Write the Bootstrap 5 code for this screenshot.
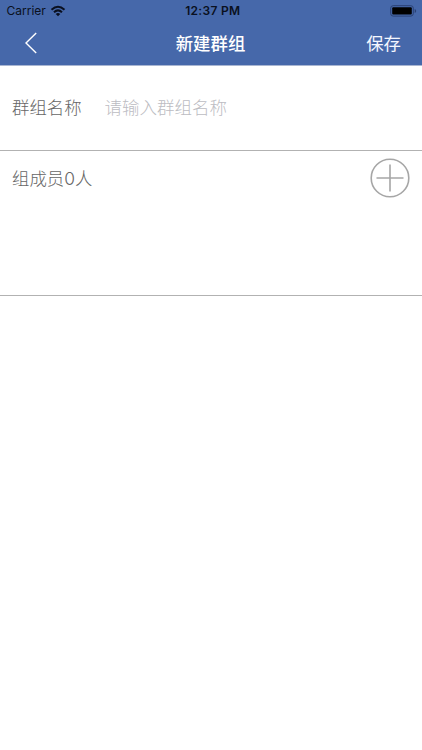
<!DOCTYPE html>
<html lang="zh-CN">
<head>
<meta charset="utf-8">
<meta name="viewport" content="width=device-width, initial-scale=1">
<title>新建群组</title>
<link href="https://cdn.jsdelivr.net/npm/bootstrap@5.3.0/dist/css/bootstrap.min.css" rel="stylesheet">
<style>
body{font-family:Inter,"Noto Sans CJK SC",sans-serif;font-size:17.5px;line-height:26px;color:#666;min-height:100vh;background:#fff}
svg{display:block;flex:none}
.app-head{background:#4668aa;height:66px;border-bottom:1px solid #a9b6d2}
.status{height:22px;padding:0 5px 0 6.5px;font-size:12px;line-height:22px;color:#0a1020}
.status > *,.titlebar > *{flex:1 1 0}
.carrier{letter-spacing:0}
.clock{font-weight:600;letter-spacing:.3px;padding-left:2px}
.titlebar{height:41px;padding:0 21px 0 24px;color:#fff}
.page-title{font-weight:500;font-size:17.4px;padding:2px 4px 0 0}
.back-btn,.save-btn,.add-btn{background:none;border:0;color:inherit;padding:0}
.save-btn{color:#f4f7ff;font-weight:400;font-size:17.4px;padding-top:2px}
.form-line{border-bottom:1px solid #b2b2b2;padding:0 12px}
.name-line{height:85px}
.member-line{height:145px;padding-top:7px}
.thin-text{font-weight:300;font-size:17.4px}
.label-col{width:92.5px}
.name-input{font-size:17.5px;line-height:26px;font-weight:300;height:26px;min-width:0}
.name-input::placeholder{color:#bcbcc2;opacity:1}
</style>
</head>
<body>
<header class="app-head">
  <div class="status d-flex align-items-center">
    <div class="d-flex align-items-center">
      <span class="carrier">Carrier</span>
      <svg class="ms-1" width="16" height="12" viewBox="0 0 16 12" fill="none" stroke="#0a1020" stroke-width="2"><path d="M1.5 4.7Q8-1.3 14.5 4.7M4 7.3Q8 3.5 12 7.3"/><path d="M5.7 8.9Q8 7 10.3 8.9L8 11.3Z" fill="#0a1020" stroke="none"/></svg>
    </div>
    <div class="clock text-center">12:37 PM</div>
    <div class="d-flex justify-content-end">
      <svg width="27" height="12" viewBox="0 0 27 12"><rect x=".7" y=".7" width="22.6" height="10.4" rx="2.5" fill="none" stroke="#2a4174"/><rect x="2.2" y="2.2" width="19.6" height="7.4" rx="1" fill="#000"/><path d="M24.7 4v4q1.5-.6 1.5-2t-1.5-2" fill="#2a4174"/></svg>
    </div>
  </div>
  <div class="titlebar d-flex align-items-center">
    <div><button class="back-btn d-block" aria-label="返回"><svg width="14" height="22" viewBox="0 0 14 22" fill="none" stroke="#fff" stroke-width="1.4"><path d="M12.2 1L2 11l10.2 10"/></svg></button></div>
    <div class="page-title text-center">新建群组</div>
    <div class="text-end"><button class="save-btn">保存</button></div>
  </div>
</header>
<main>
  <div class="form-line name-line d-flex align-items-center">
    <label class="label-col thin-text" for="groupName">群组名称</label>
    <input id="groupName" class="name-input border-0 p-0 flex-grow-1" placeholder="请输入群组名称">
  </div>
  <section class="form-line member-line d-flex justify-content-between align-items-start">
    <div class="thin-text pt-2">组成员0人</div>
    <button class="add-btn" aria-label="添加成员"><svg width="40" height="40" viewBox="0 0 40 40" fill="none" stroke="#a6a6a6" stroke-width="1.6"><circle cx="20" cy="20" r="18.8"/><path d="M6.5 20h27M20 6.5v27"/></svg></button>
  </section>
</main>
<script src="https://cdn.jsdelivr.net/npm/bootstrap@5.3.0/dist/js/bootstrap.bundle.min.js"></script>
</body>
</html>
